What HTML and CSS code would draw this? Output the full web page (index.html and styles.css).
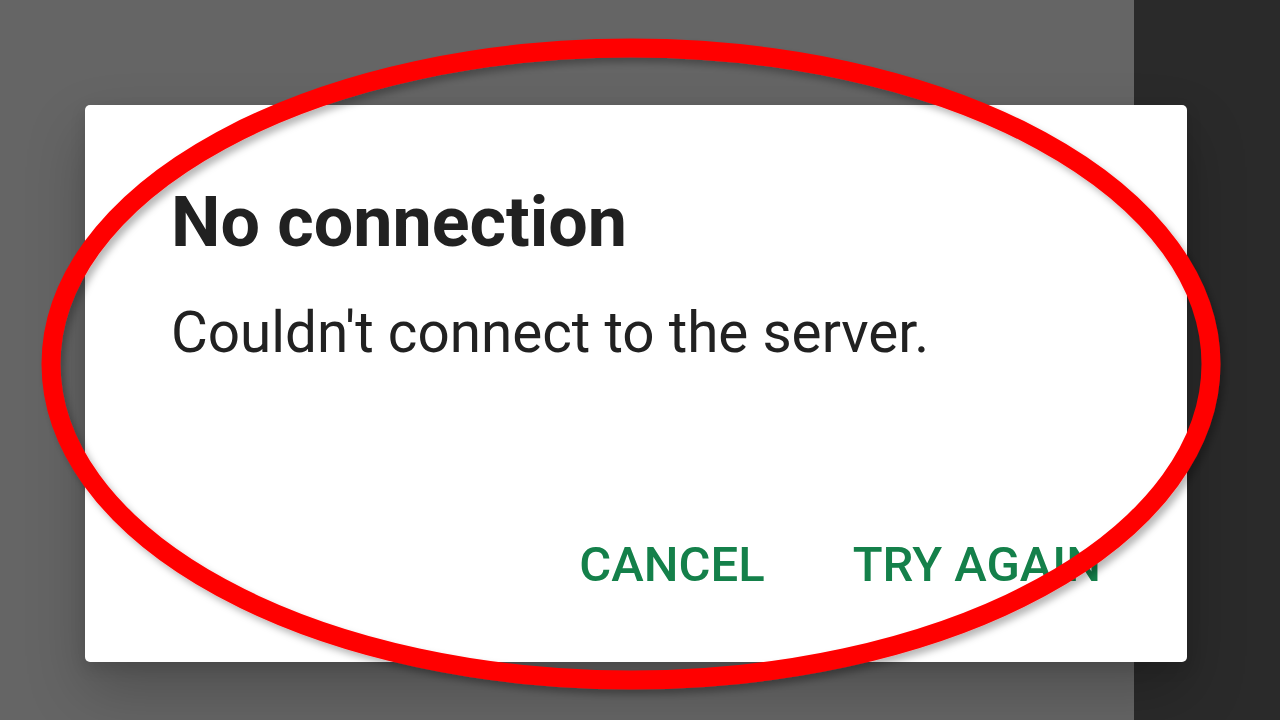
FILE: index.html
```html
<!DOCTYPE html>
<html lang="en">
<head>
<meta charset="utf-8">
<title>No connection</title>
<link rel="stylesheet" href="styles.css">
</head>
<body>
<div class="screen">
  <div class="dialog" role="dialog">
    <h1 class="dialog-title">No connection</h1>
    <p class="dialog-message">Couldn't connect to the server.</p>
    <div class="dialog-actions">
      <button class="dialog-btn">CANCEL</button>
      <button class="dialog-btn">TRY AGAIN</button>
    </div>
  </div>
</div>
<svg class="annotation" width="1280" height="720" viewBox="0 0 1280 720" aria-hidden="true">
  <defs>
    <filter id="shade" x="-10%" y="-10%" width="120%" height="120%">
      <feDropShadow dx="4" dy="5" stdDeviation="3.5" flood-color="#000" flood-opacity="0.28"/>
    </filter>
  </defs>
  <ellipse cx="631" cy="364" rx="580" ry="316" fill="none" stroke="#ff0000" stroke-width="19" filter="url(#shade)"/>
</svg>
</body>
</html>
```

FILE: styles.css
```css
html, body {
  margin: 0;
  padding: 0;
}

body {
  width: 1280px;
  height: 720px;
  overflow: hidden;
  position: relative;
  font-family: Roboto, "Noto Sans", "Liberation Sans", sans-serif;
  background: linear-gradient(to right, #656565 0, #656565 1134px, #2a2a2a 1134px, #2a2a2a 100%);
}

.screen {
  width: 1280px;
  height: 720px;
  padding-top: 105px;
  padding-left: 85px;
  box-sizing: border-box;
}

.dialog {
  width: 1102px;
  height: 557px;
  box-sizing: border-box;
  background: #ffffff;
  border-radius: 5px;
  padding: 75px 86px 0 86px;
  box-shadow: 0 28px 60px rgba(0, 0, 0, 0.22), 0 6px 16px rgba(0, 0, 0, 0.12);
  display: flex;
  flex-direction: column;
}

.dialog-title {
  margin: 0;
  font-size: 70px;
  line-height: 84px;
  font-weight: 700;
  color: #212121;
}

.dialog-message {
  margin: 36px 0 0 0;
  font-size: 56.6px;
  line-height: 66px;
  font-weight: 400;
  color: #212121;
}

.dialog-actions {
  margin-top: 170px;
  display: flex;
  justify-content: flex-end;
  gap: 88px;
}

.dialog-btn {
  font-family: inherit;
  font-size: 49px;
  line-height: 58px;
  font-weight: 500;
  color: #14804a;
  background: none;
  border: none;
  padding: 0;
  margin: 0;
}

.annotation {
  position: absolute;
  left: 0;
  top: 0;
  pointer-events: none;
}
```
